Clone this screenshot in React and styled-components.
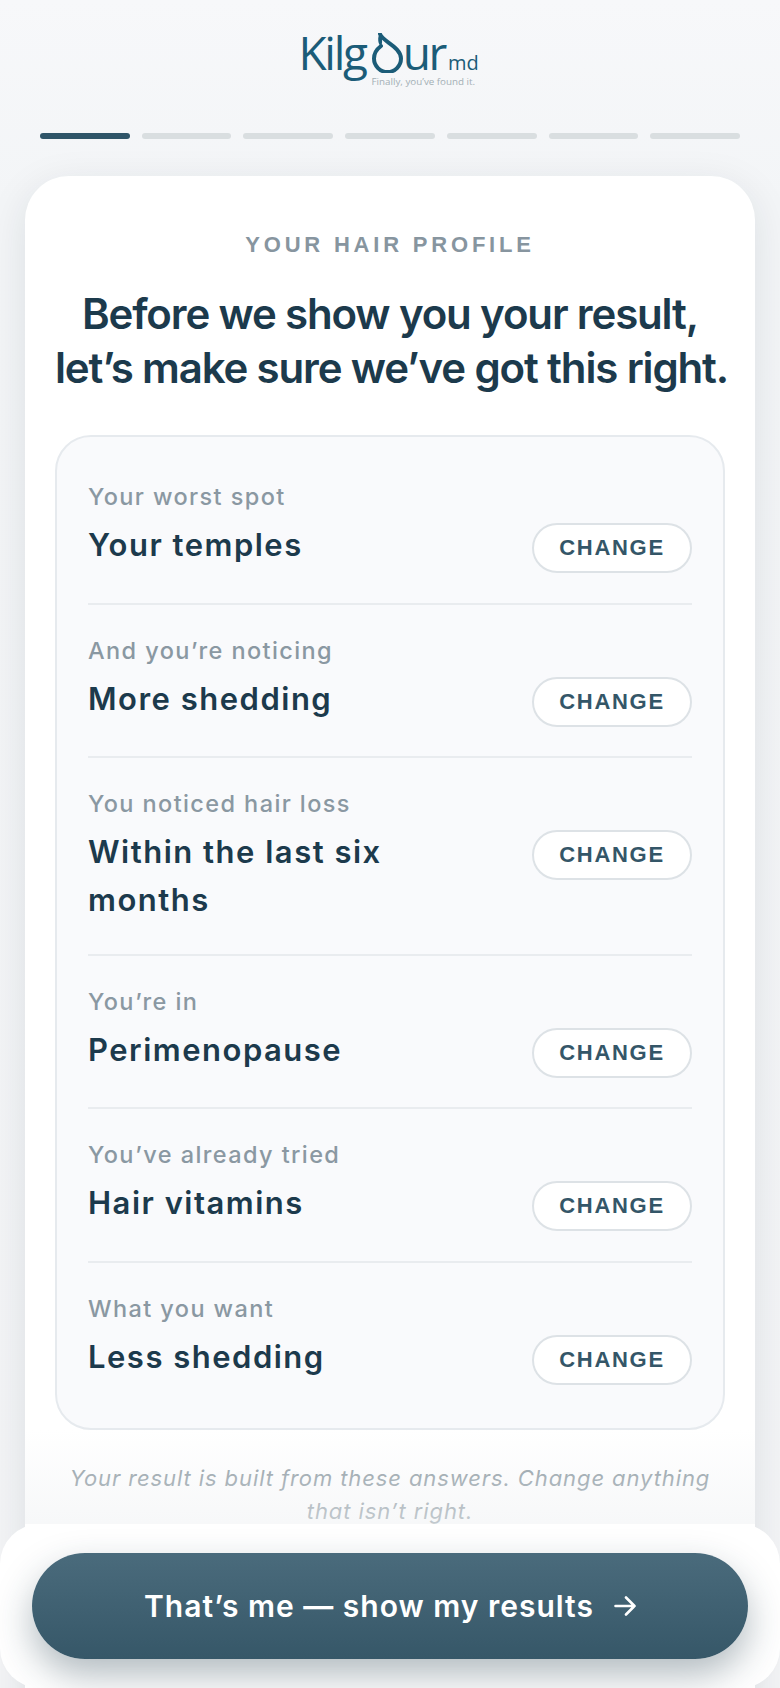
import React from "react";
import styled, { createGlobalStyle } from "styled-components";

const Global = createGlobalStyle`
  html, body { margin: 0; padding: 0; background: #f6f8fa; }
  body { font-family: Inter, "Liberation Sans", sans-serif; }
  * { box-sizing: border-box; }
`;

const Page = styled.div`
  position: relative;
  width: 780px;
  height: 1688px;
  overflow: hidden;
  background: linear-gradient(#f7f8fa, #f3f5f7 200px, #f3f4f6);
`;

const LogoRow = styled.header`
  height: 115px;
  padding-top: 30px;
  display: flex;
  justify-content: center;
`;

const Logo = styled.div`
  position: relative;
  width: 175px;
  height: 56px;
  margin-right: 8px;
  display: flex;
  align-items: flex-start;
  color: #1b5c78;
  font-family: "Open Sans", sans-serif;
  font-weight: 500;
  font-size: 46px;
  line-height: 44px;
  letter-spacing: -2.3px;
`;

const LogoWord = styled.span`
  display: block;
`;

const LogoMd = styled.span`
  font-weight: 500;
  font-size: 20px;
  line-height: 20px;
  letter-spacing: 0;
  margin: 23px 0 0 3px;
`;

const LogoTag = styled.span`
  position: absolute;
  left: 73px;
  top: 46px;
  white-space: nowrap;
  font-size: 9.8px;
  font-weight: 500;
  line-height: 11px;
  letter-spacing: 0;
  color: #a3afb5;
`;

const DropMark = styled.svg`
  flex: none;
  margin: 3px -1px 0 5px;
`;

const Steps = styled.div`
  display: flex;
  gap: 12px;
  padding: 18px 40px 0;
  height: 61px;
`;

const Step = styled.div`
  flex: 1;
  height: 6px;
  border-radius: 3px;
  background: ${(p) => (p.$on ? "#2f5568" : "#d9dee0")};
`;

const Card = styled.main`
  margin: 0 25px;
  height: 1600px;
  padding: 56px 30px 0;
  background: #fff;
  border-radius: 44px 44px 0 0;
  box-shadow: 0 10px 40px rgba(20, 40, 50, 0.1);
`;

const Eyebrow = styled.div`
  text-align: center;
  font-family: "Liberation Sans", sans-serif;
  font-weight: 700;
  font-size: 22px;
  line-height: 26px;
  letter-spacing: 3.8px;
  color: #87959f;
`;

const Heading = styled.h1`
  margin: 29px 0 0;
  text-align: center;
  font-weight: 600;
  font-size: 42px;
  line-height: 54px;
  letter-spacing: -1.15px;
  color: #1c3a4c;
  white-space: nowrap;
`;

const Panel = styled.section`
  margin-top: 40px;
  padding: 14px 31px 14px;
  background: #f9fafc;
  border: 2px solid #e6eaee;
  border-radius: 36px;
`;

const Row = styled.div`
  display: flex;
  align-items: flex-start;
  justify-content: space-between;
  padding: 29px 0 29.500px;
  border-top: ${(p) => (p.$first ? "none" : "2px solid #e9ecef")};
`;

const RowText = styled.div`
  width: 340px;
`;

const RowLabel = styled.div`
  font-size: 23.5px;
  font-weight: 500;
  line-height: 34px;
  letter-spacing: 1.4px;
  color: #8a98a2;
`;

const RowValue = styled.div`
  margin-top: 7px;
  font-size: 31px;
  font-weight: 600;
  line-height: 48px;
  letter-spacing: 1.5px;
  color: #1c3a4c;
`;

const ChangeBtn = styled.button`
  flex: none;
  margin-top: 43px;
  width: 160px;
  height: 50px;
  padding: 0;
  background: #fff;
  border: 2px solid #dde2e6;
  border-radius: 25px;
  font-family: "Liberation Sans", sans-serif;
  font-weight: 700;
  font-size: 22px;
  letter-spacing: 1.7px;
  color: #345668;
`;

const Note = styled.p`
  margin: 32px 10px 0;
  text-align: center;
  font-style: italic;
  font-size: 22px;
  line-height: 33px;
  letter-spacing: 0.9px;
  color: #8c99a1;
`;

const Fade = styled.div`
  position: absolute;
  left: 25px;
  right: 25px;
  top: 1430px;
  height: 94px;
  background: linear-gradient(rgba(240, 242, 244, 0), rgba(240, 242, 244, 0.55));
  pointer-events: none;
`;

const BottomBar = styled.footer`
  position: absolute;
  left: 0;
  right: 0;
  top: 1524px;
  height: 164px;
  padding: 29px 32px 0;
  background: #fff;
  border-radius: 40px;
`;

const Cta = styled.button`
  width: 100%;
  height: 106px;
  display: flex;
  align-items: center;
  justify-content: center;
  gap: 20px;
  border: none;
  border-radius: 53px;
  background: linear-gradient(#4a6b7c, #365768);
  box-shadow: 0 16px 36px rgba(30, 55, 70, 0.34);
  color: #fff;
  font-family: Inter, sans-serif;
  font-weight: 600;
  font-size: 30px;
  letter-spacing: 1px;
`;

const rows = [
  ["Your worst spot", "Your temples"],
  ["And you’re noticing", "More shedding"],
  ["You noticed hair loss", "Within the last six months"],
  ["You’re in", "Perimenopause"],
  ["You’ve already tried", "Hair vitamins"],
  ["What you want", "Less shedding"],
];

export default function App() {
  return (
    <Page>
      <Global />
      <LogoRow>
        <Logo>
          <LogoWord>Kilg</LogoWord>
          <DropMark width="33" height="40" viewBox="0 0 33 40" fill="none">
            <path
              d="M9 1C11 8 30 14 30 25.500a13.500 13.500 0 1 1-27 0C3 20 6 16 10 13"
              stroke="#1b5c78"
              strokeWidth="4"
              strokeLinecap="round"
            />
            <path d="M9 0C6 5 7 11 10 13.500 12 9 11 4 9 0Z" fill="#1b5c78" />
          </DropMark>
          <LogoWord>ur</LogoWord>
          <LogoMd>md</LogoMd>
          <LogoTag>Finally, you’ve found it.</LogoTag>
        </Logo>
      </LogoRow>
      <Steps>
        {[0, 1, 2, 3, 4, 5, 6].map((i) => (
          <Step key={i} $on={i === 0} />
        ))}
      </Steps>
      <Card>
        <Eyebrow>YOUR HAIR PROFILE</Eyebrow>
        <Heading>
          Before we show you your result,
          <br />
          let’s make sure we’ve got this right.
        </Heading>
        <Panel>
          {rows.map(([label, value], i) => (
            <Row key={label} $first={i === 0}>
              <RowText>
                <RowLabel>{label}</RowLabel>
                <RowValue>{value}</RowValue>
              </RowText>
              <ChangeBtn>CHANGE</ChangeBtn>
            </Row>
          ))}
        </Panel>
        <Note>Your result is built from these answers. Change anything that isn’t right.</Note>
      </Card>
      <Fade />
      <BottomBar>
        <Cta>
          That’s me — show my results
          <svg width="22" height="20" viewBox="0 0 22 20" fill="none" stroke="#fff" strokeWidth="2.6" strokeLinecap="round" strokeLinejoin="round">
            <path d="M1.500 10h19M12 1.500 20.500 10 12 18.500" />
          </svg>
        </Cta>
      </BottomBar>
    </Page>
  );
}
